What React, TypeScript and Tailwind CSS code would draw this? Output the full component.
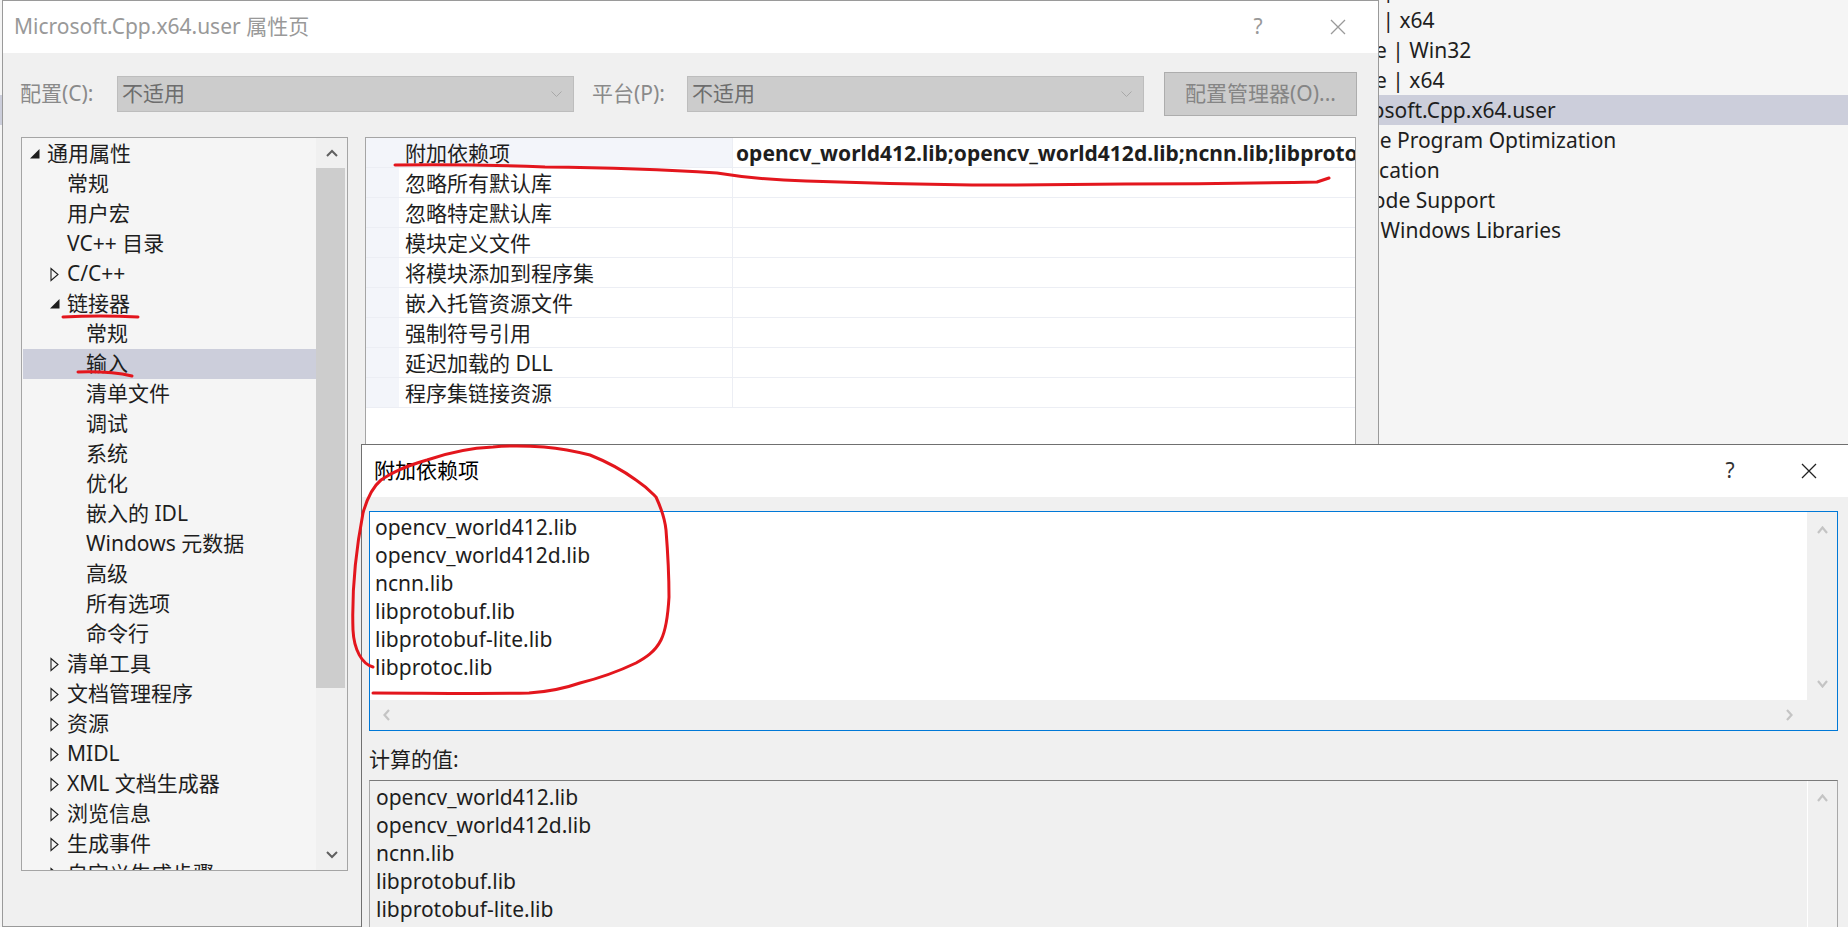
import React from "react";

type TreeNode = { t: string; l: 0 | 1 | 2; e?: "open" | "closed"; sel?: boolean };

const tree: TreeNode[] = [
  { t: "通用属性", l: 0, e: "open" },
  { t: "常规", l: 1 },
  { t: "用户宏", l: 1 },
  { t: "VC++ 目录", l: 1 },
  { t: "C/C++", l: 1, e: "closed" },
  { t: "链接器", l: 1, e: "open" },
  { t: "常规", l: 2 },
  { t: "输入", l: 2, sel: true },
  { t: "清单文件", l: 2 },
  { t: "调试", l: 2 },
  { t: "系统", l: 2 },
  { t: "优化", l: 2 },
  { t: "嵌入的 IDL", l: 2 },
  { t: "Windows 元数据", l: 2 },
  { t: "高级", l: 2 },
  { t: "所有选项", l: 2 },
  { t: "命令行", l: 2 },
  { t: "清单工具", l: 1, e: "closed" },
  { t: "文档管理程序", l: 1, e: "closed" },
  { t: "资源", l: 1, e: "closed" },
  { t: "MIDL", l: 1, e: "closed" },
  { t: "XML 文档生成器", l: 1, e: "closed" },
  { t: "浏览信息", l: 1, e: "closed" },
  { t: "生成事件", l: 1, e: "closed" },
  { t: "自定义生成步骤", l: 1, e: "closed" },
];

const indent = ["pl-[7px]", "pl-[27px]", "pl-[46px]"];

const props = [
  "附加依赖项",
  "忽略所有默认库",
  "忽略特定默认库",
  "模块定义文件",
  "将模块添加到程序集",
  "嵌入托管资源文件",
  "强制符号引用",
  "延迟加载的 DLL",
  "程序集链接资源",
];

const libs = [
  "opencv_world412.lib",
  "opencv_world412d.lib",
  "ncnn.lib",
  "libprotobuf.lib",
  "libprotobuf-lite.lib",
  "libprotoc.lib",
];

const pmRows = [
  { t: "Debug | Win32", l: 0 },
  { t: "Debug | x64", l: 0 },
  { t: "Release | Win32", l: 0 },
  { t: "Release | x64", l: 0 },
  { t: "Microsoft.Cpp.x64.user", l: 1, sel: true },
  { t: "Whole Program Optimization", l: 1 },
  { t: "Application", l: 1 },
  { t: "Unicode Support", l: 1 },
  { t: "Core Windows Libraries", l: 1 },
];

const CloseX = ({ color }: { color: string }) => (
  <svg width="16" height="16" viewBox="0 0 16 16" className="shrink-0">
    <path d="M1 1L15 15M15 1L1 15" stroke={color} strokeWidth="1.3" fill="none" />
  </svg>
);

const Tri = ({ e }: { e?: "open" | "closed" }) => (
  <svg width="17" height="30" viewBox="0 0 17 30" className="shrink-0">
    {e === "open" && <polygon points="9.5,10 9.5,19.5 0,19.5" fill="#1e1e1e" />}
    {e === "closed" && <polygon points="1,9.5 1,21.5 8,15.5" fill="none" stroke="#1e1e1e" strokeWidth="1.1" />}
  </svg>
);

const Combo = () => (
  <div className="w-[457px] h-[36px] border border-[#bdbdbd] bg-[#cccccc] flex items-center pl-[4px] pr-[11px] text-[#6d6d6d]">
    <span className="flex-1">不适用</span>
    <svg width="11" height="6" viewBox="0 0 11 6">
      <path d="M0.5 0.5L5.5 5.5L10.5 0.5" stroke="#a8a8a8" strokeWidth="1" fill="none" />
    </svg>
  </div>
);

const LightUp = () => (
  <svg width="11" height="8" viewBox="0 0 11 8">
    <path d="M1 7L5.5 1.5L10 7" stroke="#c4c4c4" strokeWidth="2.2" fill="none" />
  </svg>
);

const LightDown = () => (
  <svg width="11" height="8" viewBox="0 0 11 8">
    <path d="M1 1L5.5 6.5L10 1" stroke="#c4c4c4" strokeWidth="2.2" fill="none" />
  </svg>
);

// property manager window behind the dialogs, mostly hidden
const PropertyManager = () => (
  <div className="flex flex-col -mt-[25px]">
    {pmRows.map((r, i) => (
      <div
        key={i}
        className={`h-[30px] leading-[30px] whitespace-nowrap ${r.l ? "pl-[1329px]" : "pl-[1311px]"} ${r.sel ? "bg-[#cccedb]" : ""}`}
      >
        {r.t}
      </div>
    ))}
  </div>
);

const Tree = () => (
  <div className="w-[327px] h-[734px] border border-[#a5a5a5] bg-[#f5f5f5] flex shrink-0">
    <div className="flex-1 pt-[1px] pl-[1px] overflow-hidden">
      {tree.map((n, i) => (
        <div key={i} className={`h-[30px] flex items-center whitespace-nowrap ${indent[n.l]} ${n.sel ? "bg-[#cccedb]" : ""}`}>
          <Tri e={n.e} />
          <span>{n.t}</span>
        </div>
      ))}
    </div>
    <div className="w-[31px] flex flex-col bg-[#f0f0f0]">
      <div className="h-[30px] flex items-center justify-center">
        <svg width="12" height="8" viewBox="0 0 12 8">
          <path d="M1 7L6 2L11 7" stroke="#606060" strokeWidth="2" fill="none" />
        </svg>
      </div>
      <div className="h-[520px] bg-[#cdcdcd] mr-[2px]" />
      <div className="flex-1" />
      <div className="h-[30px] flex items-center justify-center">
        <svg width="12" height="8" viewBox="0 0 12 8">
          <path d="M1 1L6 6L11 1" stroke="#606060" strokeWidth="2" fill="none" />
        </svg>
      </div>
    </div>
  </div>
);

const Grid = () => (
  <div className="w-[991px] h-[760px] border border-[#a5a5a5] bg-white shrink-0 flex flex-col">
    {props.map((p, i) => (
      <div key={i} className="h-[30px] shrink-0 flex border-b border-[#eceef4]">
        <div className="w-[33px] bg-[#f3f5fa]" />
        <div className={`w-[334px] pl-[6px] pt-[2px] flex items-center border-r border-[#eceef4] ${i === 0 ? "bg-[#f3f5fa]" : ""}`}>
          {p}
        </div>
        <div className="flex-1 pl-[3px] pt-[2px] flex items-center font-bold whitespace-nowrap overflow-hidden">
          {i === 0 ? "opencv_world412.lib;opencv_world412d.lib;ncnn.lib;libprotobuf.lib;libprotobuf-lite.lib;libprotoc.lib" : ""}
        </div>
      </div>
    ))}
  </div>
);

const MainDialog = () => (
  <div className="absolute left-[2px] top-0 w-[1377px] h-[927px] border border-[#9a9a9a] bg-[#f0f0f0] flex flex-col overflow-hidden">
    <div className="h-[52px] shrink-0 bg-white flex items-center pl-[11px] pr-[32px] text-[#999999]">
      <span className="flex-1">Microsoft.Cpp.x64.user 属性页</span>
      <span className="w-[20px] text-center">?</span>
      <span className="ml-[62px] flex">
        <CloseX color="#9a9a9a" />
      </span>
    </div>
    <div className="mt-[19px] h-[44px] shrink-0 flex items-center pl-[17px] text-[#8a8a8a]">
      <span className="w-[97px]">配置(C):</span>
      <Combo />
      <span className="ml-[18px] w-[95px]">平台(P):</span>
      <Combo />
      <div className="ml-[20px] w-[193px] h-[44px] border border-[#adadad] bg-[#cccccc] flex items-center justify-center text-[#858585]">
        配置管理器(O)...
      </div>
    </div>
    <div className="mt-[21px] flex pl-[18px] gap-[17px]">
      <Tree />
      <Grid />
    </div>
  </div>
);

const DepsDialog = () => (
  <div className="absolute left-[361px] top-[444px] right-0 h-[483px] border-l border-t border-[#707070] bg-[#f0f0f0] flex flex-col overflow-hidden">
    <div className="h-[52px] shrink-0 bg-white flex items-center pl-[12px] pr-[31px] text-black">
      <span className="flex-1">附加依赖项</span>
      <span className="w-[20px] text-center text-[#333]">?</span>
      <span className="ml-[61px] flex">
        <CloseX color="#222222" />
      </span>
    </div>
    <div className="pt-[14px] pl-[7px] pr-[10px] flex flex-col">
      <div className="h-[220px] border border-[#0078d7] bg-white flex flex-col">
        <div className="flex-1 flex">
          <div className="flex-1 pl-[5px] pt-[1px] leading-[28px] whitespace-nowrap">
            {libs.map((l) => (
              <div key={l}>{l}</div>
            ))}
          </div>
          <div className="w-[30px] bg-[#f0f0f0] flex flex-col">
            <div className="h-[36px] flex items-center justify-center">
              <LightUp />
            </div>
            <div className="flex-1" />
            <div className="h-[32px] flex items-center justify-center">
              <LightDown />
            </div>
          </div>
        </div>
        <div className="h-[30px] bg-[#f0f0f0] flex items-center pl-[13px] pr-[44px]">
          <svg width="7" height="12" viewBox="0 0 7 12">
            <path d="M6 1L1.5 6L6 11" stroke="#c4c4c4" strokeWidth="2.2" fill="none" />
          </svg>
          <span className="flex-1" />
          <svg width="7" height="12" viewBox="0 0 7 12">
            <path d="M1 1L5.5 6L1 11" stroke="#c4c4c4" strokeWidth="2.2" fill="none" />
          </svg>
        </div>
      </div>
      <div className="mt-[14px] h-[28px] leading-[28px]">计算的值:</div>
      <div className="mt-[7px] h-[200px] border border-[#a8a8a8] border-t-[#7a7a7a] bg-[#f0f0f0] flex">
        <div className="flex-1 pl-[6px] pt-[2px] leading-[28px] whitespace-nowrap">
          {libs.map((l) => (
            <div key={l}>{l}</div>
          ))}
        </div>
        <div className="w-[30px] border-l border-white flex flex-col">
          <div className="h-[34px] flex items-center justify-center">
            <LightUp />
          </div>
        </div>
      </div>
    </div>
  </div>
);

// red marker scribbles drawn on top of the screenshot
const Annotations = () => (
  <svg className="absolute inset-0 pointer-events-none" width="1848" height="927" viewBox="0 0 1848 927">
    <g stroke="#e3161d" strokeWidth="3" fill="none" strokeLinecap="round" strokeLinejoin="round">
      <path d="M395 165 Q470 164 545 167 Q640 168 717 173 Q760 180 806 181 Q890 184 972 185 Q1050 185 1125 184 Q1220 184 1317 182 L1329 178" />
      <path d="M63 317 Q100 315 138 317" />
      <path d="M78 372 Q110 371 132 376" />
      <path d="M373 667 C362 664 354 650 353 630 C352 600 354 560 363 513 C368 495 375 485 381 480 C395 470 410 465 427 460 C450 452 470 448 493 447 C515 445 530 446 544 447 C565 449 578 452 590 455 C610 463 625 472 636 480 C648 488 652 493 656 497 C662 510 665 520 666 530 C668 555 669 575 669 597 C668 615 666 630 661 640 C655 652 645 658 636 663 C615 673 600 678 580 683 C560 690 545 692 529 693 C480 694 420 693 373 693" />
    </g>
  </svg>
);

export default function App() {
  return (
    <div className="relative w-[1848px] h-[927px] overflow-hidden bg-[#f5f5f5] font-['Noto_Sans','Noto_Sans_CJK_SC',sans-serif] text-[21px] text-[#1e1e1e]">
      <PropertyManager />
      <MainDialog />
      <DepsDialog />
      <Annotations />
    </div>
  );
}
